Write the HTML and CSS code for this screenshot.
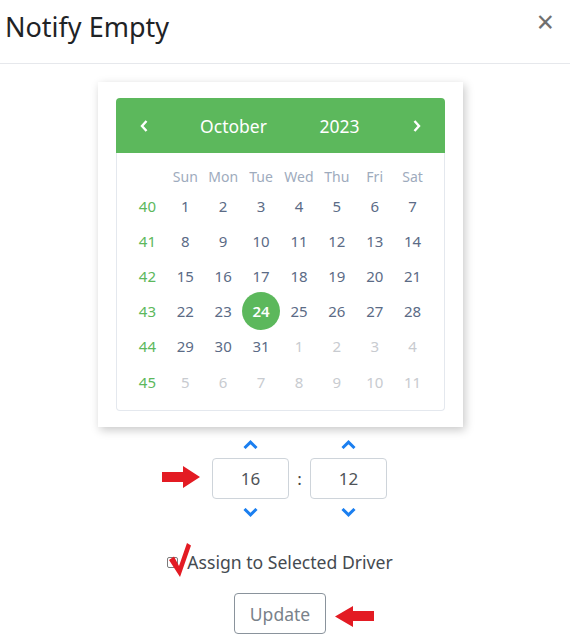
FILE: index.html
```html
<!DOCTYPE html>
<html lang="en">
<head>
	<meta charset="UTF-8">
	<title>Notify Empty</title>
	<link rel="stylesheet" href="styles.css">
</head>
<body>
	<div class="modal">
		<div class="modal-header">
			<h5 class="modal-title">Notify Empty</h5>
			<button type="button" class="close">&times;</button>
		</div>
		<div class="modal-body">
			<div class="picker-card">
				<div class="cal-head">
					<span class="cal-prev"><svg width="8" height="12" viewBox="0 0 8 12"><path d="M6.5 1 L2 6 L6.5 11" fill="none" stroke="#fff" stroke-width="2.4"/></svg></span>
					<span class="cal-month">October</span>
					<span class="cal-year">2023</span>
					<span class="cal-next"><svg width="8" height="12" viewBox="0 0 8 12"><path d="M1.5 1 L6 6 L1.5 11" fill="none" stroke="#fff" stroke-width="2.4"/></svg></span>
				</div>
				<div class="cal-body">
					<div class="cal-dow">
						<span></span><span>Sun</span><span>Mon</span><span>Tue</span><span>Wed</span><span>Thu</span><span>Fri</span><span>Sat</span>
					</div>
					<div class="cal-days">
						<span class="wk">40</span><span>1</span><span>2</span><span>3</span><span>4</span><span>5</span><span>6</span><span>7</span>
						<span class="wk">41</span><span>8</span><span>9</span><span>10</span><span>11</span><span>12</span><span>13</span><span>14</span>
						<span class="wk">42</span><span>15</span><span>16</span><span>17</span><span>18</span><span>19</span><span>20</span><span>21</span>
						<span class="wk">43</span><span>22</span><span>23</span><span class="active"><b>24</b></span><span>25</span><span>26</span><span>27</span><span>28</span>
						<span class="wk">44</span><span>29</span><span>30</span><span>31</span><span class="old">1</span><span class="old">2</span><span class="old">3</span><span class="old">4</span>
						<span class="wk">45</span><span class="old">5</span><span class="old">6</span><span class="old">7</span><span class="old">8</span><span class="old">9</span><span class="old">10</span><span class="old">11</span>
					</div>
				</div>
			</div>

			<div class="time-row">
				<svg class="mark-right" width="38" height="22" viewBox="0 0 38 22"><polygon points="0,6 21,6 21,0 38,11 21,22 21,16 0,16" fill="#e31b23"/></svg>
				<div class="timepicker">
					<span class="tp-up"><svg width="15" height="9" viewBox="0 0 15 9"><path d="M1.5 8 L7.5 2.2 L13.5 8" fill="none" stroke="#1b7ff0" stroke-width="3"/></svg></span>
					<span></span>
					<span class="tp-up"><svg width="15" height="9" viewBox="0 0 15 9"><path d="M1.5 8 L7.5 2.2 L13.5 8" fill="none" stroke="#1b7ff0" stroke-width="3"/></svg></span>
					<span class="tp-box">16</span>
					<span class="tp-sep">:</span>
					<span class="tp-box">12</span>
					<span class="tp-down"><svg width="15" height="9" viewBox="0 0 15 9"><path d="M1.5 1 L7.5 6.8 L13.5 1" fill="none" stroke="#1b7ff0" stroke-width="3"/></svg></span>
					<span></span>
					<span class="tp-down"><svg width="15" height="9" viewBox="0 0 15 9"><path d="M1.5 1 L7.5 6.8 L13.5 1" fill="none" stroke="#1b7ff0" stroke-width="3"/></svg></span>
				</div>
			</div>

			<label class="assign">
				<span class="check-wrap">
					<span class="checkbox"></span>
					<svg class="mark-check" width="24" height="34" viewBox="0 0 24 34"><polygon points="1,17 6,13.5 11,23 19,0 23,2.5 12,34" fill="#e31b23"/></svg>
				</span>
				Assign to Selected Driver
			</label>

			<div class="update-wrap">
				<button type="button" class="btn-update">Update</button>
				<svg class="mark-left" width="39" height="21" viewBox="0 0 39 21"><polygon points="0,10.5 18,0 18,5 39,5 39,15 18,15 18,21" fill="#e31b23"/></svg>
			</div>
		</div>
	</div>
</body>
</html>
```

FILE: styles.css
```css
*{
	margin: 0;
	padding: 0;
	box-sizing: border-box;
}
body{
	font-family: "Noto Sans", "Open Sans", sans-serif;
	color: #212529;
	background: #fff;
}
.modal{
	width: 570px;
}
.modal-header{
	display: flex;
	justify-content: space-between;
	align-items: flex-start;
	height: 64px;
	padding: 0 16px 0 5px;
	border-bottom: 1px solid #e6e8ec;
}
.modal-title{
	font-size: 27px;
	font-weight: 400;
	line-height: 32px;
	margin-top: 11px;
	color: #1f2326;
}
.close{
	border: 0;
	background: none;
	font-family: "Noto Sans", sans-serif;
	font-size: 30px;
	font-weight: 400;
	line-height: 30px;
	margin-top: 7px;
	color: #707070;
}
.modal-body{
	display: flex;
	flex-direction: column;
	align-items: center;
	padding: 18px 10px 0 0;
}
.picker-card{
	width: 365px;
	padding: 16px 18px 16px;
	background: #fff;
	box-shadow: 2px 3px 9px rgba(0,0,0,0.22);
}
.cal-head{
	display: grid;
	grid-template-columns: 56px 124px 88px 1fr;
	align-items: center;
	height: 55px;
	background: #5cb85c;
	color: #fff;
	border-radius: 4px 4px 0 0;
	font-size: 17.5px;
}
.cal-head span{
	display: flex;
	justify-content: center;
}
.cal-head .cal-next{
	justify-content: flex-end;
	padding-right: 24px;
}
.cal-head svg{
	display: block;
}
.cal-body{
	border: 1px solid #e4e8ee;
	border-top: 0;
	border-radius: 0 0 4px 4px;
	padding: 12px 12px 11px;
}
.cal-dow,
.cal-days{
	display: grid;
	grid-template-columns: repeat(8, 1fr);
}
.cal-dow{
	height: 23px;
	font-size: 14px;
	color: #9eabbd;
}
.cal-days{
	grid-auto-rows: 35.2px;
	font-size: 15px;
	color: #5b6b86;
}
.cal-dow span,
.cal-days span{
	display: flex;
	align-items: center;
	justify-content: center;
}
.cal-days .wk{
	color: #5cb85c;
}
.cal-days .old{
	color: #c8cbd0;
}
.cal-days .active b{
	display: flex;
	align-items: center;
	justify-content: center;
	flex: none;
	width: 38px;
	height: 38px;
	border-radius: 50%;
	background: #5cb85c;
	color: #fff;
	font-weight: 600;
}
.time-row{
	display: flex;
	align-items: flex-start;
	gap: 12px;
	margin: 5px 11px 0 0;
}
.mark-right{
	display: block;
	margin-top: 34px;
}
.timepicker{
	display: grid;
	grid-template-columns: 77px 21px 77px;
	grid-template-rows: 26px 41px 29px;
}
.tp-up,
.tp-down{
	display: flex;
	align-items: flex-start;
	justify-content: center;
	padding-top: 8px;
}
.tp-down{
	padding-top: 9px;
}
.tp-box{
	display: flex;
	align-items: center;
	justify-content: center;
	border: 1px solid #ced4da;
	border-radius: 4px;
	font-size: 17px;
	color: #505458;
}
.tp-sep{
	display: flex;
	align-items: center;
	justify-content: center;
	font-size: 17px;
	color: #444;
}
.assign{
	display: flex;
	align-items: center;
	height: 24px;
	margin-top: 22px;
	font-size: 17.6px;
	color: #454a50;
}
.check-wrap{
	position: relative;
	margin-right: 9px;
}
.checkbox{
	display: block;
	width: 11px;
	height: 11px;
	border: 1px solid #7c7c7c;
	border-radius: 2px;
}
.mark-check{
	position: absolute;
	left: 1px;
	top: -14px;
}
.update-wrap{
	position: relative;
	margin-top: 19px;
}
.btn-update{
	display: block;
	width: 92px;
	height: 41px;
	border: 1px solid #8a939c;
	border-radius: 4px;
	background: #fff;
	font-family: "Noto Sans", sans-serif;
	font-size: 17.5px;
	color: #7a828a;
}
.mark-left{
	position: absolute;
	left: 101px;
	top: 13px;
}
```
